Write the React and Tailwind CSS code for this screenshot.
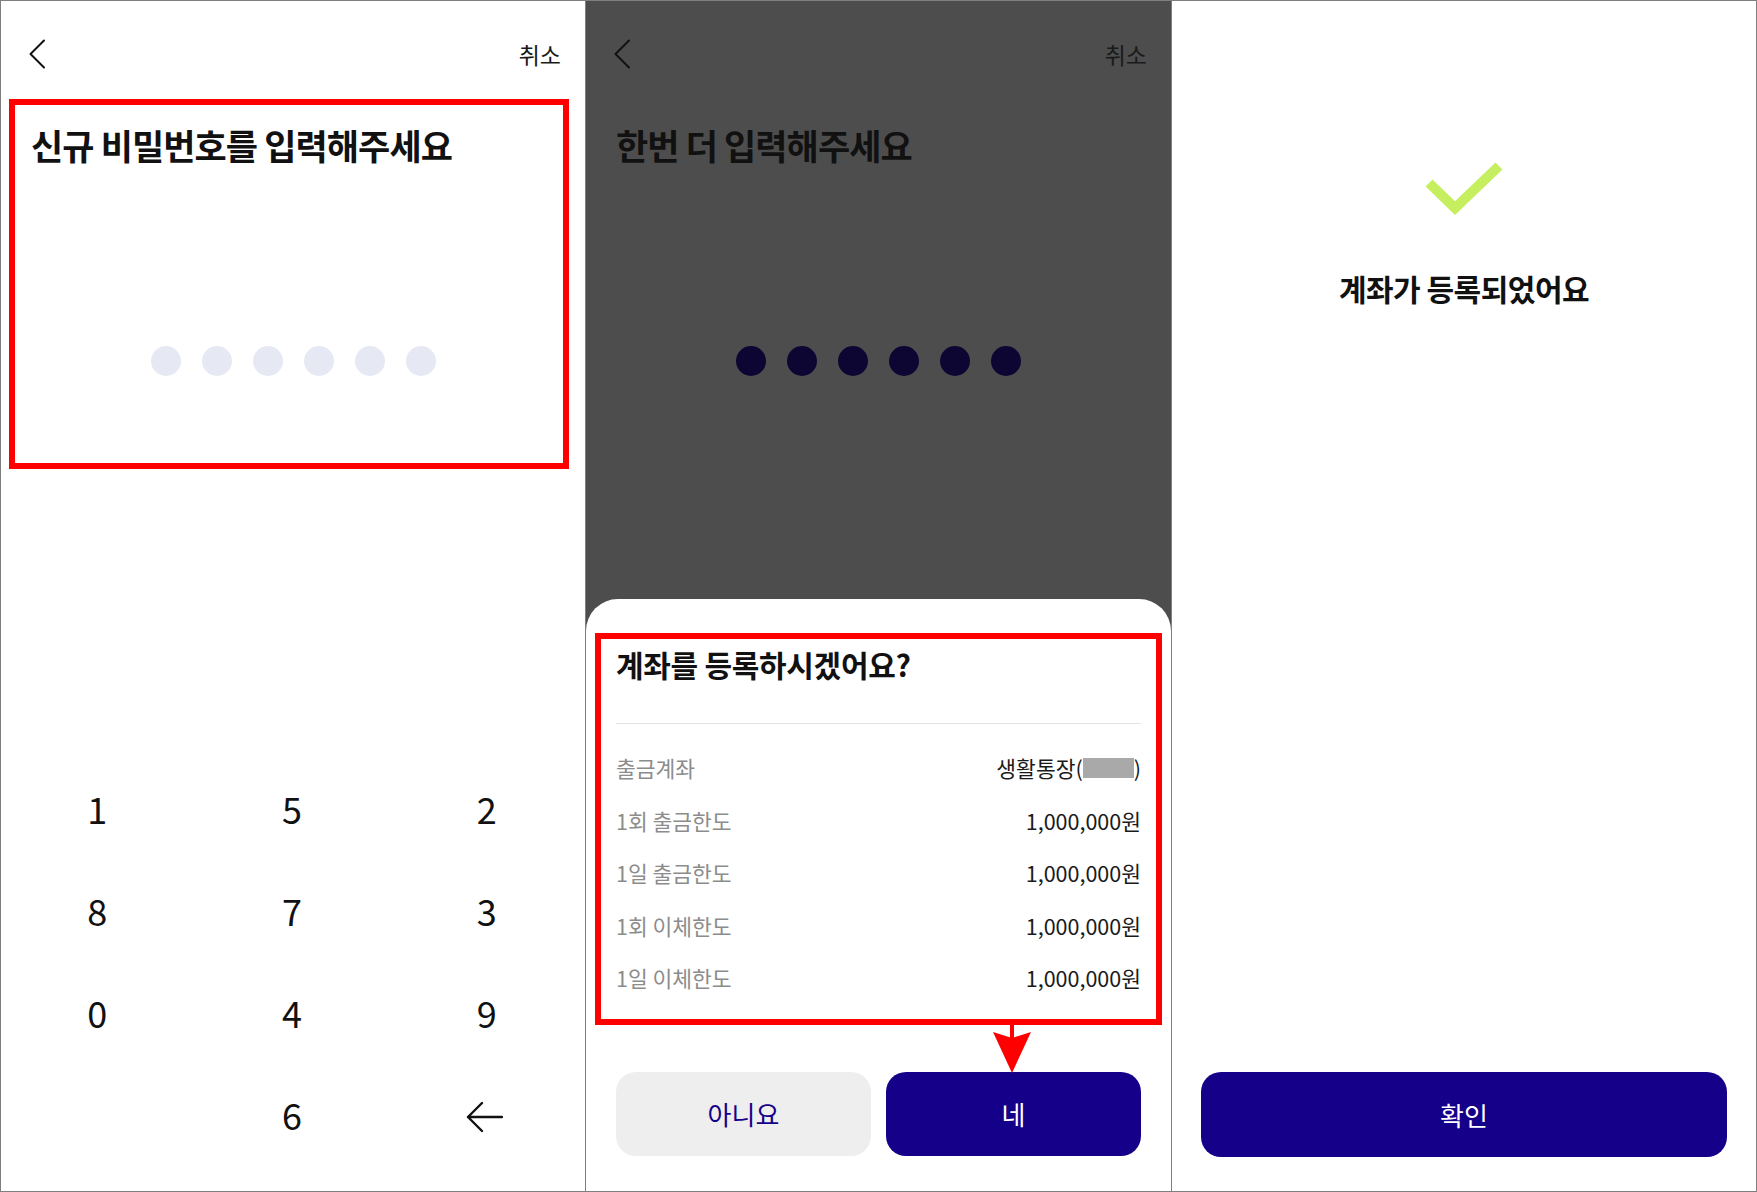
import React from "react";

const FONT = { fontFamily: '"Noto Sans CJK KR", "Noto Sans", sans-serif' };

function Chevron() {
  return (
    <svg width="18" height="30" viewBox="0 0 18 30" fill="none">
      <path d="M16 1.5 L2.5 15 L16 28.5" stroke="#111" strokeWidth="2" strokeLinecap="round" strokeLinejoin="round" />
    </svg>
  );
}

function Header() {
  return (
    <div className="flex h-[106px] items-center justify-between pl-[27px] pr-[24px]">
      <Chevron />
      <span className="text-[23px] leading-[30px] text-[#1a1a1a]">취소</span>
    </div>
  );
}

function Dots({ color }) {
  return (
    <div className="flex justify-center gap-[21px]">
      {[0, 1, 2, 3, 4, 5].map((i) => (
        <div key={i} className={`h-[30px] w-[30px] rounded-full ${color}`} />
      ))}
    </div>
  );
}

function BackArrow() {
  return (
    <svg className="mr-[6px] mt-[6px]" width="38" height="32" viewBox="0 0 38 32" fill="none">
      <path d="M37 16 H3 M17 2 L3 16 L17 30" stroke="#111" strokeWidth="2.4" strokeLinecap="round" strokeLinejoin="round" />
    </svg>
  );
}

function Keypad() {
  const keys = ["1", "5", "2", "8", "7", "3", "0", "4", "9", "", "6", "back"];
  return (
    <div className="mt-auto grid grid-cols-3 pb-[26px]">
      {keys.map((k, i) => (
        <div key={i} className="flex h-[102px] items-center justify-center pr-[2px] text-[36px] leading-[40px] text-[#111]">
          {k === "back" ? <BackArrow /> : k}
        </div>
      ))}
    </div>
  );
}

function Row({ label, children }) {
  return (
    <div className="flex h-[52.5px] items-center justify-between text-[21.5px] leading-[28px]">
      <span className="text-[#8c8c8c]">{label}</span>
      <span className="flex items-center text-[#1a1a1a]">{children}</span>
    </div>
  );
}

export default function App() {
  return (
    <div className="flex h-[1192px] w-[1757px] border border-[#7f7f7f] bg-white" style={FONT}>
      {/* Panel 1 */}
      <div className="relative flex w-[585px] flex-col border-r border-[#7f7f7f] bg-white">
        <Header />
        <h1 className="px-[30px] pt-[14px] text-[35px] font-bold leading-[48px] tracking-[-0.9px] text-[#111]">
          신규 비밀번호를 입력해주세요
        </h1>
        <div className="mt-[177px]">
          <Dots color="bg-[#e6e9f4]" />
        </div>
        <Keypad />
        <div className="absolute left-[8px] top-[98px] h-[370px] w-[560px] border-[6px] border-[#ff0000]" />
      </div>

      {/* Panel 2 */}
      <div className="relative flex w-[586px] flex-col border-r border-[#7f7f7f] bg-[#4d4d4d]">
        <Header />
        <h1 className="px-[30px] pt-[14px] text-[35px] font-bold leading-[48px] tracking-[-0.9px] text-[#111]">
          한번 더 입력해주세요
        </h1>
        <div className="mt-[177px]">
          <Dots color="bg-[#0d0633]" />
        </div>
        <div className="mt-auto flex h-[592px] flex-col rounded-t-[32px] bg-white px-[30px] pt-[45px]">
          <h2 className="text-[30px] font-bold leading-[40px] tracking-[-0.3px] text-[#111]">계좌를 등록하시겠어요?</h2>
          <div className="mt-[39px] h-px bg-[#e2e2e2]" />
          <div className="mt-[18px]">
            <Row label="출금계좌">
              생활통장(<span className="inline-block h-[20px] w-[51px] bg-[#a9a9a9]" />)
            </Row>
            <Row label="1회 출금한도">1,000,000원</Row>
            <Row label="1일 출금한도">1,000,000원</Row>
            <Row label="1회 이체한도">1,000,000원</Row>
            <Row label="1일 이체한도">1,000,000원</Row>
          </div>
          <div className="mt-[67px] flex gap-[15px]">
            <button className="flex h-[84px] flex-1 items-center justify-center rounded-[20px] bg-[#eeeeee] text-[26px] text-[#16008a]">
              아니요
            </button>
            <button className="flex h-[84px] flex-1 items-center justify-center rounded-[20px] bg-[#15008a] text-[26px] text-white">
              네
            </button>
          </div>
        </div>
        <div className="absolute left-[9px] top-[632px] h-[392px] w-[567px] border-[6px] border-[#ff0000]" />
        <svg className="absolute left-[406px] top-[1019px]" width="40" height="53" viewBox="0 0 40 53">
          <rect x="18" y="0" width="4" height="22" fill="#ff0000" />
          <polygon points="1,12 20,18 39,12 20,53" fill="#ff0000" />
        </svg>
      </div>

      {/* Panel 3 */}
      <div className="flex flex-1 flex-col items-center bg-white">
        <svg className="mt-[159px]" width="80" height="60" viewBox="0 0 80 60" fill="none">
          <polyline points="5,23 31,48 75,6" stroke="#c6ef5f" strokeWidth="10" strokeLinejoin="miter" />
        </svg>
        <h2 className="mt-[48px] text-[30px] font-bold leading-[40px] tracking-[-0.5px] text-[#111]">계좌가 등록되었어요</h2>
        <div className="mt-auto w-full px-[29px] pb-[34px]">
          <button className="flex h-[85px] w-full items-center justify-center rounded-[20px] bg-[#15008a] text-[26px] text-white">
            확인
          </button>
        </div>
      </div>
    </div>
  );
}
